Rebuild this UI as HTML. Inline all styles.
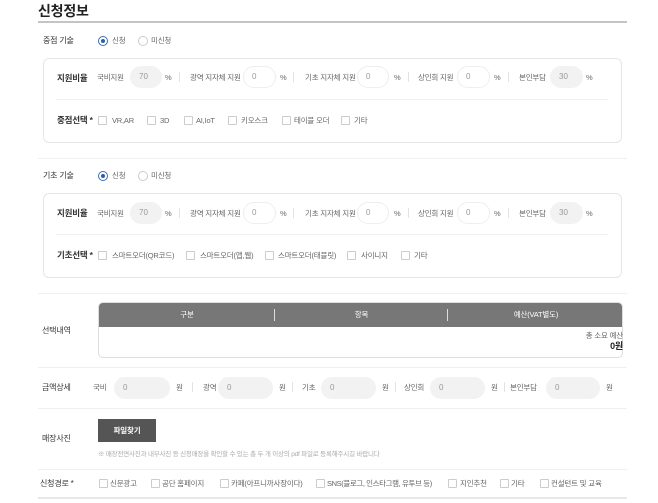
<!DOCTYPE html>
<html><head><meta charset="utf-8"><style>
*{margin:0;padding:0;box-sizing:border-box}
body{width:658px;height:503px;background:#fff;position:relative;overflow:hidden;font-family:"Liberation Sans","Noto Sans CJK KR",sans-serif;color:#666;font-size:7.5px}
.a{position:absolute;white-space:nowrap;line-height:10px;letter-spacing:-0.2px}
.lb{font-size:8px;color:#333}
.b{font-weight:bold;color:#333;font-size:8.5px}
.in{position:absolute;height:22px;border-radius:11px;border:1px solid #eee;background:#fff;font-size:8px;color:#999;padding-left:8px;line-height:20px}
.g{background:#f2f2f2;border-color:#f2f2f2}
.cb{position:absolute;width:9px;height:9px;border:1px solid #ccc;border-radius:1px;background:#fff}
.rd{position:absolute;width:10px;height:10px;border:1px solid #ccc;border-radius:50%}
.on{border-color:#3a6fb5}
.on::after{content:"";position:absolute;left:2px;top:2px;width:4px;height:4px;border-radius:50%;background:#2f5fa0}
.sep{position:absolute;left:38px;width:589px;height:1px;background:#f0f0f0}
.vd{position:absolute;width:1px;height:10px;background:#e3e3e3}
.box{position:absolute;left:43px;width:579px;border:1px solid #e6e6e6;border-radius:6px}
</style></head><body>
<div class="a" style="left:38px;top:3px;font-size:14px;font-weight:bold;color:#222;line-height:16px">신청정보</div>
<div style="position:absolute;left:38px;top:21px;width:589px;height:2px;background:#c4c4c4"></div>

<div class="a lb" style="left:43px;top:36px">중점 기술</div>
<div class="rd on" style="left:98px;top:36px"></div><div class="a" style="left:112px;top:36px">신청</div>
<div class="rd" style="left:138px;top:36px"></div><div class="a" style="left:151px;top:36px">미신청</div>
<div class="box" style="top:58px;height:85px"></div>
<div style="position:absolute;left:56px;top:99px;width:552px;height:1px;background:#f0f0f0"></div>
<div class="a b" style="left:57px;top:73px">지원비율</div>
<div class="a" style="left:97px;top:73px">국비지원</div><div class="in g" style="left:130px;top:66px;width:32px">70</div><div class="a" style="left:165px;top:73px">%</div>
<div class="vd" style="left:179px;top:72px"></div>
<div class="a" style="left:190px;top:73px">광역 지자체 지원</div><div class="in" style="left:243px;top:66px;width:33px">0</div><div class="a" style="left:280px;top:73px">%</div>
<div class="vd" style="left:293px;top:72px"></div>
<div class="a" style="left:305px;top:73px">기초 지자체 지원</div><div class="in" style="left:357px;top:66px;width:32px">0</div><div class="a" style="left:394px;top:73px">%</div>
<div class="vd" style="left:408px;top:72px"></div>
<div class="a" style="left:418px;top:73px">상인회 지원</div><div class="in" style="left:457px;top:66px;width:33px">0</div><div class="a" style="left:494px;top:73px">%</div>
<div class="vd" style="left:508px;top:72px"></div>
<div class="a" style="left:519px;top:73px">본인부담</div><div class="in g" style="left:550px;top:66px;width:33px">30</div><div class="a" style="left:586px;top:73px">%</div>
<div class="a b" style="left:57px;top:115px">중점선택 *</div>
<div class="cb" style="left:98px;top:116px"></div><div class="a" style="left:112px;top:116px">VR,AR</div>
<div class="cb" style="left:147px;top:116px"></div><div class="a" style="left:160px;top:116px">3D</div>
<div class="cb" style="left:184px;top:116px"></div><div class="a" style="left:196px;top:116px">AI,IoT</div>
<div class="cb" style="left:228px;top:116px"></div><div class="a" style="left:241px;top:116px">키오스크</div>
<div class="cb" style="left:282px;top:116px"></div><div class="a" style="left:294px;top:116px">테이블 오더</div>
<div class="cb" style="left:341px;top:116px"></div><div class="a" style="left:354px;top:116px">기타</div>
<div class="sep" style="top:158px"></div>

<div class="a lb" style="left:43px;top:171px">기초 기술</div>
<div class="rd on" style="left:98px;top:171px"></div><div class="a" style="left:112px;top:171px">신청</div>
<div class="rd" style="left:138px;top:171px"></div><div class="a" style="left:151px;top:171px">미신청</div>
<div class="box" style="top:193px;height:85px"></div>
<div style="position:absolute;left:56px;top:234px;width:552px;height:1px;background:#f0f0f0"></div>
<div class="a b" style="left:57px;top:208px">지원비율</div>
<div class="a" style="left:97px;top:209px">국비지원</div><div class="in g" style="left:130px;top:202px;width:32px">70</div><div class="a" style="left:165px;top:209px">%</div>
<div class="vd" style="left:179px;top:208px"></div>
<div class="a" style="left:190px;top:209px">광역 지자체 지원</div><div class="in" style="left:243px;top:202px;width:33px">0</div><div class="a" style="left:280px;top:209px">%</div>
<div class="vd" style="left:293px;top:208px"></div>
<div class="a" style="left:305px;top:209px">기초 지자체 지원</div><div class="in" style="left:357px;top:202px;width:32px">0</div><div class="a" style="left:394px;top:209px">%</div>
<div class="vd" style="left:408px;top:208px"></div>
<div class="a" style="left:418px;top:209px">상인회 지원</div><div class="in" style="left:457px;top:202px;width:33px">0</div><div class="a" style="left:494px;top:209px">%</div>
<div class="vd" style="left:508px;top:208px"></div>
<div class="a" style="left:519px;top:209px">본인부담</div><div class="in g" style="left:550px;top:202px;width:33px">30</div><div class="a" style="left:586px;top:209px">%</div>
<div class="a b" style="left:57px;top:250px">기초선택 *</div>
<div class="cb" style="left:98px;top:251px"></div><div class="a" style="left:112px;top:251px">스마트오더(QR코드)</div>
<div class="cb" style="left:186px;top:251px"></div><div class="a" style="left:200px;top:251px">스마트오더(앱,웹)</div>
<div class="cb" style="left:265px;top:251px"></div><div class="a" style="left:278px;top:251px">스마트오더(태블릿)</div>
<div class="cb" style="left:347px;top:251px"></div><div class="a" style="left:361px;top:251px">사이니지</div>
<div class="cb" style="left:401px;top:251px"></div><div class="a" style="left:414px;top:251px">기타</div>
<div class="sep" style="top:293px"></div>

<div class="a lb" style="left:42px;top:326px">선택내역</div>
<div style="position:absolute;left:98px;top:302px;width:525px;height:56px;border:1px solid #ddd;border-radius:5px;overflow:hidden">
 <div style="height:24px;background:#777;color:#fff;position:relative;font-size:7.5px;line-height:24px">
  <span class="a" style="left:0;width:176px;text-align:center;line-height:24px">구분</span>
  <span style="position:absolute;left:175px;top:6px;width:1px;height:12px;background:#ddd"></span>
  <span class="a" style="left:176px;width:173px;text-align:center;line-height:24px">항목</span>
  <span style="position:absolute;left:348px;top:6px;width:1px;height:12px;background:#ddd"></span>
  <span class="a" style="left:349px;width:176px;text-align:center;line-height:24px">예산(VAT별도)</span>
 </div>
</div>
<div class="a" style="left:560px;top:331px;width:63px;text-align:right">총 소요 예산</div>
<div class="a" style="left:560px;top:341px;width:63px;text-align:right;font-weight:bold;color:#222;font-size:9px">0원</div>
<div class="sep" style="top:367px"></div>

<div class="a lb" style="left:42px;top:383px">금액상세</div>
<div class="a" style="left:93px;top:383px">국비</div><div class="in g" style="left:114px;top:377px;width:56px">0</div><div class="a" style="left:176px;top:383px">원</div>
<div class="vd" style="left:192px;top:382px"></div>
<div class="a" style="left:203px;top:383px">광역</div><div class="in g" style="left:218px;top:377px;width:55px">0</div><div class="a" style="left:279px;top:383px">원</div>
<div class="vd" style="left:292px;top:382px"></div>
<div class="a" style="left:302px;top:383px">기초</div><div class="in g" style="left:321px;top:377px;width:55px">0</div><div class="a" style="left:382px;top:383px">원</div>
<div class="vd" style="left:395px;top:382px"></div>
<div class="a" style="left:404px;top:383px">상인회</div><div class="in g" style="left:430px;top:377px;width:55px">0</div><div class="a" style="left:491px;top:383px">원</div>
<div class="vd" style="left:504px;top:382px"></div>
<div class="a" style="left:510px;top:383px">본인부담</div><div class="in g" style="left:546px;top:377px;width:54px">0</div><div class="a" style="left:606px;top:383px">원</div>
<div class="sep" style="top:408px"></div>

<div class="a lb" style="left:42px;top:434px">매장사진</div>
<div class="a" style="left:98px;top:419px;width:58px;height:23px;background:#555;color:#fff;font-weight:bold;text-align:center;line-height:23px">파일찾기</div>
<div class="a" style="left:98px;top:450px;font-size:6.5px;color:#aaa">※ 매장전면사진과 내부사진 등 신청매장을 확인할 수 있는 총 두 개 이상의 pdf 파일로 등록해주시길 바랍니다</div>
<div class="sep" style="top:469px"></div>

<div class="a lb" style="left:40px;top:479px">신청경로 *</div>
<div class="cb" style="left:99px;top:479px"></div><div class="a" style="left:110px;top:479px">신문광고</div>
<div class="cb" style="left:151px;top:479px"></div><div class="a" style="left:162px;top:479px">공단 홈페이지</div>
<div class="cb" style="left:220px;top:479px"></div><div class="a" style="left:231px;top:479px">카페(아프니까사장이다)</div>
<div class="cb" style="left:316px;top:479px"></div><div class="a" style="left:327px;top:479px;letter-spacing:-0.4px">SNS(블로그, 인스타그램, 유투브 등)</div>
<div class="cb" style="left:448px;top:479px"></div><div class="a" style="left:460px;top:479px">지인추천</div>
<div class="cb" style="left:500px;top:479px"></div><div class="a" style="left:511px;top:479px">기타</div>
<div class="cb" style="left:540px;top:479px"></div><div class="a" style="left:551px;top:479px">컨설턴트 및 교육</div>
<div style="position:absolute;left:38px;top:497px;width:589px;height:2px;background:#e8e8e8"></div>
</body></html>
